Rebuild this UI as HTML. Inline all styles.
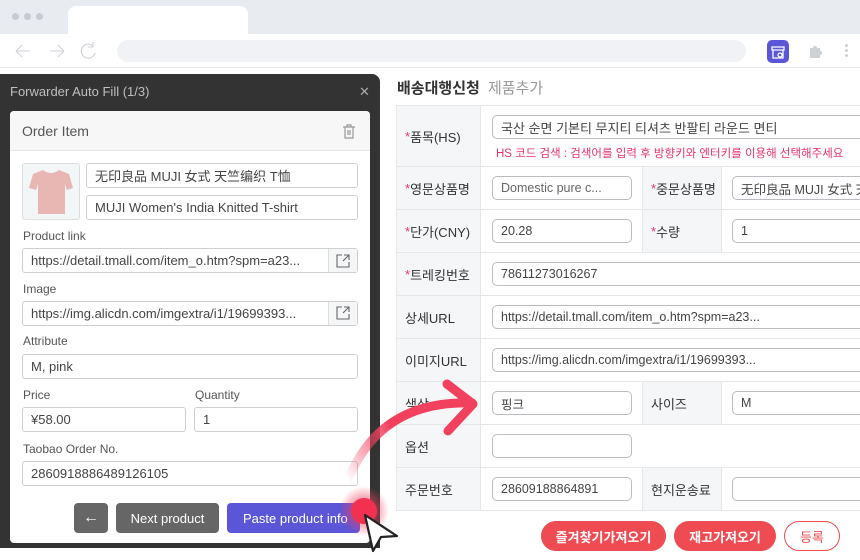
<!DOCTYPE html><html><head><meta charset="utf-8"><style>
*{box-sizing:border-box;margin:0;padding:0}
body{width:860px;height:560px;overflow:hidden;background:#fff;font-family:"Liberation Sans","Noto Sans CJK KR",sans-serif;position:relative;color:#333}
.a{position:absolute}
.inp{position:absolute;border:1px solid #cfcfcf;border-radius:3px;background:#fff;font-size:13px;color:#444;padding-left:8px;display:flex;align-items:center;white-space:nowrap;overflow:hidden}
.lbl{position:absolute;font-size:12px;color:#555}
.ri{position:absolute;border:1px solid #b9bcc2;border-radius:5px;background:#fff;font-size:12.5px;color:#444;padding-left:8px;display:flex;align-items:center;white-space:nowrap;overflow:hidden}
.tl{position:absolute;font-size:13px;color:#333;display:flex;align-items:center;padding-left:10px;background:#f4f6f7}
.st{color:#e8336b}
.hl{position:absolute;left:396px;width:464px;height:1px;background:#e4e6e8}
.btn{position:absolute;border-radius:4px;color:#fff;font-size:13px;display:flex;align-items:center;justify-content:center}
.rb{position:absolute;border-radius:15px;font-size:13px;font-weight:bold;display:flex;align-items:center;justify-content:center;background:#ee4b52;color:#fff}
</style></head><body>
<div class="a" style="left:0;top:0;width:860px;height:34px;background:#e8ebf0"></div>
<div class="a" style="left:12px;top:13px;width:7px;height:7px;border-radius:50%;background:#c7cad0"></div>
<div class="a" style="left:24px;top:13px;width:7px;height:7px;border-radius:50%;background:#c7cad0"></div>
<div class="a" style="left:36px;top:13px;width:7px;height:7px;border-radius:50%;background:#c7cad0"></div>
<div class="a" style="left:68px;top:6px;width:180px;height:30px;background:#fff;border-radius:8px 8px 0 0"></div>
<div class="a" style="left:0;top:34px;width:860px;height:34px;background:#fff;border-bottom:1px solid #e4e6ea"></div>
<svg class="a" style="left:10px;top:40px" width="90" height="22" fill="none" stroke="#cdd0d5" stroke-width="1.1"><path d="M6 11h14M6 11l6-6M6 11l6 6"/><path d="M40 11h14M54 11l-6-6M54 11l-6 6"/><path d="M86 6a7 7 0 1 0 2 7M86 2v5h-5" transform="translate(-3,0)"/></svg>
<div class="a" style="left:117px;top:40px;width:629px;height:22px;background:#f0f2f5;border-radius:11px"></div>
<div class="a" style="left:767px;top:40px;width:22px;height:23px;background:#5b55d8;border-radius:5px"></div>
<svg class="a" style="left:770px;top:44px" width="16" height="16" fill="none" stroke="#fff" stroke-width="1.3"><path d="M2 3h12v3H2zM3 6v8h10V6"/><circle cx="10" cy="11" r="2"/></svg>
<svg class="a" style="left:807px;top:43px" width="16" height="16" fill="#cdd0d5"><path d="M3 5h3a2 2 0 1 1 4 0h3v3a2 2 0 1 1 0 4v3H3z"/></svg>
<div class="a" style="left:845px;top:44px;width:3px;height:3px;background:#cdd0d5;border-radius:50%;box-shadow:0 5px 0 #cdd0d5,0 10px 0 #cdd0d5"></div>

<div class="a" style="left:0;top:74px;width:380px;height:474px;background:#333;border-radius:0 8px 0 0"></div>
<div class="a" style="left:10px;top:84px;font-size:13px;color:#bfbfbf">Forwarder Auto Fill (1/3)</div>
<div class="a" style="left:359px;top:84px;font-size:13px;color:#aaa">✕</div>
<div class="a" style="left:10px;top:111px;width:360px;height:432px;background:#fff;border-radius:4px;overflow:hidden">
<div style="height:40px;background:#f7f7f7;border-bottom:1px solid #e6e6e6;font-size:14px;color:#555;padding:12px 0 0 12px">Order Item</div></div>
<svg class="a" style="left:342px;top:124px" width="14" height="15" fill="none" stroke="#999" stroke-width="1.2"><path d="M1 3h12M5 3V1h4v2M3 3v11h8V3M6 6v5M8 6v5"/></svg>
<div class="a" style="left:22px;top:163px;width:58px;height:57px;border:1px solid #ddd;border-radius:3px;background:#f3f6f7"></div>
<svg class="a" style="left:28px;top:168px" width="46" height="48"><path d="M15 2 L5 6 L1 20 L8 22 L10 16 L10 46 L37 46 L37 16 L39 22 L45 20 L41 6 L31 2 Q23 8 15 2Z" fill="#e8b7b4"/></svg>
<div class="inp" style="left:86px;top:163px;width:272px;height:25px">无印良品 MUJI 女式 天竺编织 T恤</div>
<div class="inp" style="left:86px;top:195px;width:272px;height:25px">MUJI Women's India Knitted T-shirt</div>
<div class="lbl" style="left:23px;top:229px">Product link</div>
<div class="inp" style="left:22px;top:248px;width:336px;height:25px">https://detail.tmall.com/item_o.htm?spm=a23...</div>
<div class="a" style="left:328px;top:249px;width:29px;height:23px;background:#f4f6f7;border-left:1px solid #ddd"></div>
<svg class="a" style="left:336px;top:254px" width="14" height="14" fill="none" stroke="#666" stroke-width="1.1"><path d="M6 1H1v12h12V8M8 1h5v5M13 1 7 7"/></svg>
<div class="lbl" style="left:23px;top:282px">Image</div>
<div class="inp" style="left:22px;top:301px;width:336px;height:25px">https://img.alicdn.com/imgextra/i1/19699393...</div>
<div class="a" style="left:328px;top:302px;width:29px;height:23px;background:#f4f6f7;border-left:1px solid #ddd"></div>
<svg class="a" style="left:336px;top:306px" width="14" height="14" fill="none" stroke="#666" stroke-width="1.1"><path d="M6 1H1v12h12V8M8 1h5v5M13 1 7 7"/></svg>
<div class="lbl" style="left:23px;top:334px">Attribute</div>
<div class="inp" style="left:22px;top:354px;width:336px;height:25px">M, pink</div>
<div class="lbl" style="left:23px;top:388px">Price</div>
<div class="lbl" style="left:195px;top:388px">Quantity</div>
<div class="inp" style="left:22px;top:407px;width:164px;height:25px">¥58.00</div>
<div class="inp" style="left:194px;top:407px;width:164px;height:25px">1</div>
<div class="lbl" style="left:23px;top:442px">Taobao Order No.</div>
<div class="inp" style="left:22px;top:461px;width:336px;height:25px">2860918886489126105</div>
<div class="btn" style="left:74px;top:503px;width:34px;height:30px;background:#666;font-size:16px">←</div>
<div class="btn" style="left:116px;top:503px;width:103px;height:30px;background:#666">Next product</div>
<div class="btn" style="left:227px;top:503px;width:133px;height:30px;background:#5b55d8;justify-content:flex-start;padding-left:16px">Paste product info</div>

<div class="a" style="left:397px;top:77px;font-size:15px;font-weight:bold;color:#333">배송대행신청 <span style="font-weight:normal;color:#999;margin-left:4px">제품추가</span></div>
<div class="a" style="left:396px;top:105px;width:85px;height:405px;background:#f4f6f7;border-right:1px solid #e4e6e8;border-left:1px solid #e4e6e8"></div>
<div class="hl" style="top:105px"></div><div class="hl" style="top:166px"></div><div class="hl" style="top:209px"></div><div class="hl" style="top:252px"></div><div class="hl" style="top:295px"></div><div class="hl" style="top:338px"></div><div class="hl" style="top:381px"></div><div class="hl" style="top:424px"></div><div class="hl" style="top:467px"></div><div class="hl" style="top:510px"></div>
<div class="tl" style="left:642px;top:167px;width:80px;height:85px;border-left:1px solid #e4e6e8;border-right:1px solid #e4e6e8"></div>
<div class="a" style="left:642px;top:209px;width:80px;height:1px;background:#e4e6e8"></div>
<div class="tl" style="left:642px;top:382px;width:80px;height:42px;border-left:1px solid #e4e6e8;border-right:1px solid #e4e6e8"></div>
<div class="tl" style="left:642px;top:468px;width:80px;height:42px;border-left:1px solid #e4e6e8;border-right:1px solid #e4e6e8"></div>
<div class="tl" style="left:397px;top:106px;height:60px;padding-left:8px"><span class="st">*</span>품목(HS)</div>
<div class="tl" style="left:397px;top:167px;height:42px;padding-left:8px"><span class="st">*</span>영문상품명</div>
<div class="tl" style="left:397px;top:210px;height:42px;padding-left:8px"><span class="st">*</span>단가(CNY)</div>
<div class="tl" style="left:397px;top:253px;height:42px;padding-left:8px"><span class="st">*</span>트레킹번호</div>
<div class="tl" style="left:397px;top:296px;height:42px;padding-left:8px">상세URL</div>
<div class="tl" style="left:397px;top:339px;height:42px;padding-left:8px">이미지URL</div>
<div class="tl" style="left:397px;top:382px;height:42px;padding-left:8px">색상</div>
<div class="tl" style="left:397px;top:425px;height:42px;padding-left:8px">옵션</div>
<div class="tl" style="left:397px;top:468px;height:42px;padding-left:8px">주문번호</div>
<div class="tl" style="left:643px;top:167px;height:42px;padding-left:8px"><span class="st">*</span>중문상품명</div>
<div class="tl" style="left:643px;top:210px;height:42px;padding-left:8px"><span class="st">*</span>수량</div>
<div class="tl" style="left:643px;top:382px;height:42px;padding-left:8px">사이즈</div>
<div class="tl" style="left:643px;top:468px;height:42px;padding-left:8px">현지운송료</div>
<div class="ri" style="left:492px;top:115px;width:380px;height:24px;font-size:13px">국산 순면 기본티 무지티 티셔츠 반팔티 라운드 면티</div>
<div class="a" style="left:496px;top:145px;font-size:11.5px;color:#e8336b;white-space:nowrap">HS 코드 검색 : 검색어를 입력 후 방향키와 엔터키를 이용해 선택해주세요</div>
<div class="ri" style="left:492px;top:176px;width:140px;height:24px;color:#666">Domestic pure c...</div>
<div class="ri" style="left:732px;top:176px;width:140px;height:24px">无印良品 MUJI 女式 天竺</div>
<div class="ri" style="left:492px;top:219px;width:140px;height:24px">20.28</div>
<div class="ri" style="left:732px;top:219px;width:140px;height:24px">1</div>
<div class="ri" style="left:492px;top:262px;width:380px;height:24px">78611273016267</div>
<div class="ri" style="left:492px;top:305px;width:380px;height:24px">https://detail.tmall.com/item_o.htm?spm=a23...</div>
<div class="ri" style="left:492px;top:348px;width:380px;height:24px">https://img.alicdn.com/imgextra/i1/19699393...</div>
<div class="ri" style="left:492px;top:391px;width:140px;height:24px">핑크</div>
<div class="ri" style="left:732px;top:391px;width:140px;height:24px">M</div>
<div class="ri" style="left:492px;top:434px;width:140px;height:24px"></div>
<div class="ri" style="left:492px;top:477px;width:140px;height:24px">28609188864891</div>
<div class="ri" style="left:732px;top:477px;width:140px;height:24px"></div>
<div class="rb" style="left:541px;top:521px;width:125px;height:30px">즐겨찾기가져오기</div>
<div class="rb" style="left:674px;top:521px;width:102px;height:30px">재고가져오기</div>
<div class="rb" style="left:784px;top:521px;width:56px;height:30px;background:#fff;color:#ee4b52;border:1px solid #ee4b52;font-weight:normal">등록</div>

<svg class="a" style="left:0;top:0" width="860" height="560">
<defs><linearGradient id="g" x1="348" y1="480" x2="470" y2="403" gradientUnits="userSpaceOnUse"><stop offset="0" stop-color="#f2415e" stop-opacity="0"/><stop offset=".45" stop-color="#f2415e"/></linearGradient>
<radialGradient id="r"><stop offset=".5" stop-color="#f2415e" stop-opacity=".5"/><stop offset="1" stop-color="#f2415e" stop-opacity="0"/></radialGradient></defs>
<path d="M348 480 Q380 400 472 403" stroke="url(#g)" stroke-width="9" fill="none" stroke-linecap="round"/>
<path d="M447 384 L473 404 L448 431" stroke="#f2415e" stroke-width="9" fill="none" stroke-linecap="round" stroke-linejoin="round"/>
<circle cx="364" cy="511" r="25" fill="url(#r)"/>
<circle cx="364" cy="511" r="13" fill="#f2304f"/>
<path d="M365 515 L373 551 L381 537 L397 536 Z" fill="#fff" stroke="#222" stroke-width="2.2" stroke-linejoin="round"/>
</svg>
</body></html>
